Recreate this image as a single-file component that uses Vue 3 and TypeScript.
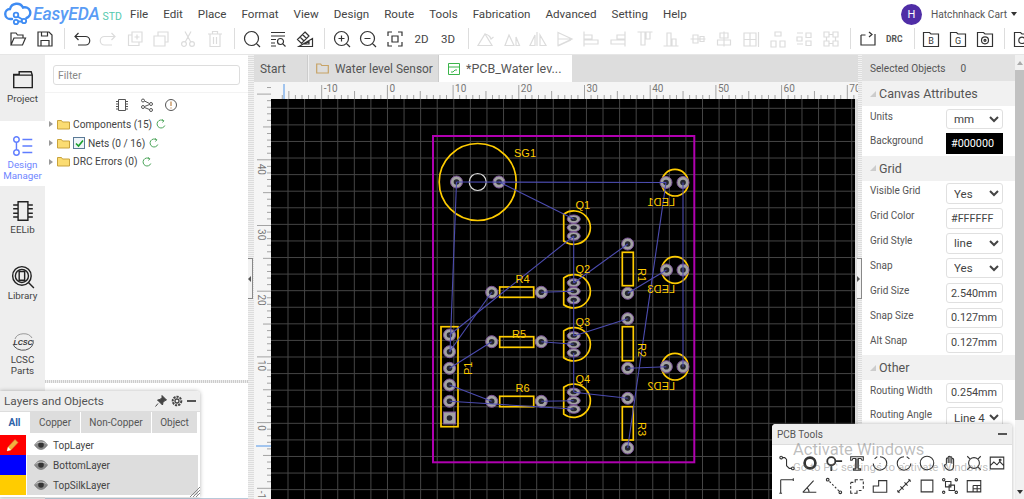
<script setup lang="ts">
const c = (x: number, y: number, r: number) =>
  `M${x - r} ${y}a${r} ${r} 0 1 0 ${2 * r} 0a${r} ${r} 0 1 0 ${-2 * r} 0`;

const menus = ['File', 'Edit', 'Place', 'Format', 'View', 'Design', 'Route', 'Tools', 'Fabrication', 'Advanced', 'Setting', 'Help'];

type Tool = { d?: string; off?: boolean; sep?: boolean; label?: string; small?: boolean; letter?: string };

const tools: Tool[] = [
  { d: 'M3 16V4h5l1.5 2H15v3M3 16h11.5L17.5 9H6L3 16z' },
  { d: 'M3 3h11l3 3v11H3zM6.5 3v4h6V3M6 17v-5.5h8V17' },
  { sep: true },
  { d: 'M6.5 4L3 7.5 6.500 11M3 7.5h10.500a4.200 4.200 0 0 1 0 8.500H6' },
  { off: true, d: 'M13.500 4L17 7.500 13.500 11M17 7.500H6.500a4.200 4.200 0 0 0 0 8.500H14' },
  { off: true, d: 'M7 3h10v10H7zM7 6H3.500v10.500H14V13M12 5.500v5M9.500 8h5' },
  { off: true, d: 'M7 3h10v10h-3v4H3V7h4zM7 7h7v6' },
  { off: true, d: `M7 2.500l5.500 10M13 2.500l-5.500 10${c(6, 15, 2.4)}${c(14, 15, 2.4)}` },
  { off: true, d: 'M3 5h14M7.500 5V2.500h5V5M5 5v12.500h10V5M8.500 8v7M11.500 8v7' },
  { sep: true },
  { d: `${c(9.5, 9.5, 7)}M14.500 14.500L18 18` },
  { d: `M3 3.500h14M3 7h14M3 10.500h5M3 14h4M3 17h5${c(12.5, 12.5, 3)}M14.800 14.800L17.500 17.500` },
  { d: 'M2.500 10.500L10 3l4 4-7.500 7.500zM5 8l4 4M7.500 5.500l4 4M10 3l4 4M4 17.500h13.500V9.500zM9.500 15h4.500v-3z' },
  { sep: true },
  { d: `${c(9.5, 9.5, 7)}M14.500 14.500L18 18M6.500 9.500h6M9.500 6.500v6` },
  { d: `${c(9.5, 9.5, 7)}M14.500 14.500L18 18M6.500 9.500h6` },
  { d: 'M3 7V3h4M13 3h4v4M17 13v4h-4M7 17H3v-4M7 7h6v6H7z' },
  { label: '2D' },
  { label: '3D' },
  { sep: true },
  { off: true, d: 'M3 16.500h14L10 5zM10 5a8 8 0 0 1 6 5M14.500 7l1.500 3 2.500-2' },
  { off: true, d: 'M3 16.500h9L7 6zM14 16.500h3.500L14 8z' },
  { off: true, d: 'M9 3v14M7 16.500H2L7 6zM12 16.500h6L12 6z' },
  { off: true, d: 'M3 3.500l14 6.500-14 6.500zM3 10h14M3 17l13-6' },
  { off: true, d: 'M3 2.500v15M3 6h8v4H3M3 11h14v4H3' },
  { off: true, d: 'M17 2.500v15M17 6H9v4h8M17 11H3v4h14' },
  { off: true, d: 'M2.500 3h15M6 3v13h4V3M11 3v7h4V3' },
  { off: true, d: 'M2.500 17h15M6 17V4h4v13M11 17v-7h4v7' },
  { off: true, d: 'M2.500 10h15M5 6h5v8H5zM12 7.500h4v5h-4z' },
  { off: true, d: 'M10 2.500v15M6 4h8v5H6zM3.500 11h13v5h-13z' },
  { off: true, d: 'M3 4h12v13H3zM9 4v13M3 10.500h12M17.500 3v15' },
  { off: true, d: 'M7 3h6v4H7zM3 12h5v6H3zM12 12h5v6h-5z' },
  { off: true, d: 'M3 8h5v4H3zM3 4h6M9 15H3M12 4h5v4.500h-5zM12 12h5v4.500h-5z' },
  { off: true, d: 'M3 3h5v5H3zM12 3h5v5h-5zM3 12h5v5H3zM12 12h5v5h-5zM8 5.500h4M8 14.500h4M5.500 8v4M14.500 8v4' },
  { sep: true },
  { d: 'M3 6v10h14V5M3 6h4.500M11 3l3 2.500-3 2.500' },
  { label: 'DRC', small: true },
  { sep: true },
  { letter: 'B', d: 'M2.500 3.500h6l1.500 1.500h7.500v12.500h-15z' },
  { letter: 'G', d: 'M2.500 3.500h6l1.500 1.500h7.500v12.500h-15z' },
  { d: `M2.500 3.500h6l1.500 1.500h7.500v12.500h-15z${c(10, 11.3, 3.5)}${c(10, 11.3, 1)}` },
  { sep: true },
  { d: `M2.500 3.500h6l1.500 1.500h7.500v12.500h-15z${c(10, 11.3, 3.2)}` },
];

const sideItems = [
  { lines: ['Project'], d: 'M2.500 18V6h5V3.500h11l1 3v11.500zM2.500 6.500h17' },
  { lines: ['Design', 'Manager'], d: `${c(5, 5, 2.5)}${c(5, 17, 2.5)}M5 7.500v7M10.500 5h9M10.500 11h9M10.500 17h9`, active: true },
  { lines: ['EELib'], d: `M6.500 2.500h9v17h-9zM2 5.500h4.500M2 9h4.500M2 13h4.500M2 16.500h4.500M15.500 5.500H20M15.500 9H20M15.500 13H20M15.500 16.500H20` },
  { lines: ['Library'], d: `${c(10, 10, 8.5)}${c(10, 10, 6)}M7.500 6h5v8h-5zM16 16l5 5` },
];

const treeRows = [
  { label: 'Components (15)', check: false },
  { label: 'Nets (0 / 16)', check: true },
  { label: 'DRC Errors (0)', check: false },
];

const layerTabs = ['All', 'Copper', 'Non-Copper', 'Object'];
const layers = [
  { name: 'TopLayer', color: '#ff0000', on: false },
  { name: 'BottomLayer', color: '#0000ff', on: true },
  { name: 'TopSilkLayer', color: '#ffcc00', on: true },
];

type Field = { label: string; value: string; select?: boolean; dark?: boolean };
const sections: { title: string; fields: Field[] }[] = [
  {
    title: 'Canvas Attributes',
    fields: [
      { label: 'Units', value: 'mm', select: true },
      { label: 'Background', value: '#000000', dark: true },
    ],
  },
  {
    title: 'Grid',
    fields: [
      { label: 'Visible Grid', value: 'Yes', select: true },
      { label: 'Grid Color', value: '#FFFFFF' },
      { label: 'Grid Style', value: 'line', select: true },
      { label: 'Snap', value: 'Yes', select: true },
      { label: 'Grid Size', value: '2.540mm' },
      { label: 'Snap Size', value: '0.127mm' },
      { label: 'Alt Snap', value: '0.127mm' },
    ],
  },
  {
    title: 'Other',
    fields: [
      { label: 'Routing Width', value: '0.254mm' },
      { label: 'Routing Angle', value: 'Line 4', select: true },
    ],
  },
];

const pcbTools: { d: string; w?: number }[] = [
  { d: `${c(3.5, 4, 1.5)}${c(16.5, 16, 1.5)}M5 4h2.500l2 2v7l3 3H15` },
  { d: c(10, 10, 6), w: 3 },
  { d: `${c(7, 8, 4.5)}M11.500 8H19M7 12.500V19`, w: 2 },
  { d: 'M3 3h14v4h-1.500l-1-2H11.500v11.500H14V18H6v-1.500h2.500V5H5.500l-1 2H3zM10 5v11' },
  { d: 'M10 3a7.500 7.500 0 1 1-7.500 7.500M4 5.500L7 3M10 10.500v.5M2.500 10.500h0' },
  { d: 'M10 3a7.500 7.500 0 1 0 7.500 7.500M16 5.500L13 3M10 10.500v.5' },
  { d: c(10, 10, 7.5) },
  { d: 'M6 11V5.500a1 1 0 0 1 2 0V10V3.500a1 1 0 0 1 2 0V10V4a1 1 0 0 1 2 0v6.500V6a1 1 0 0 1 2 0v7c0 3-2 5-4.500 5S6 17 4 13.500c-1-1.500 1-2.500 2-1' },
  { d: `${c(10, 10, 6)}M2.500 2.500l3.500 3.500M17.500 2.500L14 6M2.500 17.500L6 14M17.500 17.500L14 14` },
  { d: `M2.500 3.500h15v13h-15zM2.500 13l4-4 3.500 3 3-3.500 4.500 4.500${c(13.5, 6.8, 1)}` },
  { d: 'M3 3h14M3 3v15M17 1.500v3M1.500 18h3' },
  { d: 'M2 17h15M2 17L14 4M9 17a8 8 0 0 0-2-5' },
  { d: `${c(3, 3, 1.5)}${c(17, 17, 1.5)}M5 5l1.500 1.500M8 8l1.500 1.500M11 11l1.500 1.500M14 14l1.500 1.500` },
  { d: 'M3 6h3M8 6v-3h3M13 3h4M17 5v3M17 10v3M15 15h-3M10 15v3H7M5 18H3v-3M3 13v-3M3 8V6' },
  { d: 'M2.500 17V10h6V4h9v13z' },
  { d: 'M3 17L17 3M10.500 6l3.500 3.500M6 10.500L9.500 14M15 2.500l2.500 2.500M2.500 15L5 17.500' },
  { d: 'M3.500 3.500h13v13h-13z' },
  { d: `${c(3, 3, 1.3)}${c(17, 3, 1.3)}${c(3, 17, 1.3)}${c(17, 17, 1.3)}M5 5h6v6H5zM9 9h6v6H9z` },
  { d: 'M2.500 4h15v12.500h-15zM9 9.500h8.500M9 13h8.500M9 9.500v7M13.500 9.500v7' },
];

// board geometry, in page pixels
const gridX = Array.from({ length: 35 }, (_, i) => 288 + i * 16.58);
const gridY = Array.from({ length: 24 }, (_, i) => 108.3 + i * 16.58);
const step = 6.57;
const topTicks = Array.from({ length: 90 }, (_, i) => {
  const x = 321.7 - 6 * step + i * step;
  const n = i - 6;
  const mod = ((n % 10) + 10) % 10;
  return { x, h: mod === 0 ? 14 : mod === 5 ? 8 : 4 };
});
const leftTicks = Array.from({ length: 62 }, (_, i) => {
  const y = 488.3 - i * step;
  const mod = i % 10;
  return { y, h: mod === 0 ? 14 : mod === 5 ? 8 : 4 };
});
const topLabels = ['-10', '0', '10', '20', '30', '40', '50', '60', '70'].map((t, i) => ({ t, x: 321.7 + i * 65.7 }));
const leftLabels = ['40', '30', '20', '10', '0', '-1'].map((t, i) => ({ t, y: 161.7 + i * 65.4 }));

const pads = [
  [456.5, 182], [499, 182], [666, 182.5], [683, 182.5], [666.5, 270], [683, 270], [666.3, 366.7], [683, 366.7],
  [491.7, 292.3], [541.3, 292.3], [491.7, 341.7], [541.3, 341.7], [491.7, 401.3], [541.3, 401.3],
  [627.7, 244], [627.7, 293.3], [627.7, 318.7], [627.7, 368.3], [627.7, 398.3], [627.7, 448],
  [449.5, 335], [449.5, 351.7], [449.5, 368.3], [449.5, 385], [449.5, 401.3],
];
const transistors = [227.6, 291.3, 344.3, 400.7];
const ovals = transistors.flatMap((y) => [y - 8.5, y, y + 8.5]);
const qPath = (y: number) => `M563.7 ${y - 13.4}A16.7 16.7 0 1 1 563.7 ${y + 13.4}Z`;
const bodies = [
  [499.7, 287, 34, 10.3], [499.7, 336.7, 34, 10.6], [499.7, 396.3, 34, 10.4],
  [622.3, 252.3, 11, 33.4], [622.3, 326.7, 11, 34], [622.3, 406.7, 11, 33.3], [441, 326.7, 17, 100],
];
const ratlines = [
  [456.5, 182, 666, 182.5], [456.5, 182, 450, 352], [499, 182, 573.7, 219], [573.7, 236, 449.5, 335],
  [573.7, 236, 573.7, 283], [573.7, 300, 573.7, 336], [573.7, 353, 573.7, 392],
  [627.7, 244, 573.7, 283], [491.7, 292.3, 449.5, 351.7], [541.3, 292.3, 573.7, 291.3],
  [627.7, 293.3, 666.5, 270], [666, 182.5, 627.7, 448], [683, 182.5, 683, 366.7],
  [491.7, 341.7, 449.5, 368.3], [541.3, 341.7, 573.7, 344.3], [573.7, 336, 627.7, 318.7],
  [627.7, 368.3, 666.3, 366.7], [573.7, 392.3, 627.7, 398.3], [491.7, 401.3, 449.5, 385],
  [541.3, 401.3, 573.7, 400.7], [449.5, 401.3, 573.7, 409],
];
const labels = [
  { t: 'SG1', x: 514, y: 157 }, { t: 'Q1', x: 575.5, y: 209 }, { t: 'Q2', x: 575.5, y: 273 },
  { t: 'Q3', x: 575.5, y: 326 }, { t: 'Q4', x: 575.5, y: 383 }, { t: 'R4', x: 515.5, y: 283 },
  { t: 'R5', x: 512, y: 338 }, { t: 'R6', x: 515.5, y: 392 },
];
const sideLabels = [
  { t: 'R1', x: 638, y: 268, r: 90 }, { t: 'R2', x: 638, y: 343, r: 90 }, { t: 'R3', x: 638, y: 422, r: 90 },
  { t: 'P1', x: 472, y: 375, r: -90 },
];
const mirrored = [
  { t: 'LED1', y: 206 }, { t: 'LED3', y: 293 }, { t: 'LED2', y: 390 },
];
</script>

<template>
  <div class="app">
    <header class="menubar">
      <div class="logo">
        <svg width="29" height="24" viewBox="0 0 29 24" class="logo-cloud">
          <path d="M8 17H6.500a5 5 0 0 1-.5-10A7 7 0 0 1 19 5.500a5.500 5.500 0 0 1 3.500 10.500" fill="none" stroke="#3f8cf3" stroke-width="2.400" stroke-linecap="round" />
          <circle cx="12" cy="13" r="2.300" fill="none" stroke="#3f8cf3" stroke-width="1.800" />
          <circle cx="12" cy="20" r="2.200" fill="none" stroke="#3f8cf3" stroke-width="1.800" />
          <circle cx="20" cy="19" r="2.200" fill="none" stroke="#3f8cf3" stroke-width="1.800" />
          <path d="M14 19.500h4M13.500 14.500l5 3" stroke="#3f8cf3" stroke-width="1.800" />
        </svg>
        <span class="logo-name">EasyEDA</span>
        <span class="logo-std">STD</span>
      </div>
      <nav class="menu">
        <span v-for="m in menus" :key="m">{{ m }}</span>
      </nav>
      <div class="user">
        <span class="avatar">H</span>
        <span class="user-name">Hatchnhack Cart</span>
        <span class="caret"></span>
      </div>
    </header>

    <div class="toolbar">
      <template v-for="(t, i) in tools" :key="i">
        <span v-if="t.sep" class="tb-sep"></span>
        <span v-else-if="t.label" class="tb-btn tb-label" :class="{ small: t.small }">{{ t.label }}</span>
        <span v-else class="tb-btn">
          <svg width="20" height="20" viewBox="0 0 20 20" fill="none" :stroke="t.off ? '#dcdcdc' : '#333'" stroke-width="1.200">
            <path :d="t.d" />
            <text v-if="t.letter" x="10" y="15" class="tb-letter" text-anchor="middle">{{ t.letter }}</text>
          </svg>
        </span>
      </template>
    </div>

    <main class="body">
      <aside class="sidebar">
        <div v-for="s in sideItems" :key="s.lines[0]" class="side-item" :class="{ active: s.active }">
          <svg width="24" height="24" viewBox="0 0 22 22" fill="none" :stroke="s.active ? '#5f7dff' : '#222'" stroke-width="1.300">
            <path :d="s.d" />
          </svg>
          <span v-for="l in s.lines" :key="l">{{ l }}</span>
        </div>
        <div class="side-item lcsc-item">
          <svg width="24" height="18" viewBox="0 0 24 18">
            <path d="M2 11a10 8 0 0 0 20 -4" fill="none" stroke="#555" stroke-width="1" />
            <path d="M4 6a9 7 0 0 1 17 -1" fill="none" stroke="#999" stroke-width="1" />
            <text x="12" y="12" class="lcsc" text-anchor="middle">LCSC</text>
          </svg>
          <span>LCSC</span>
          <span>Parts</span>
        </div>
      </aside>

      <section class="tree">
        <div class="filter-wrap">
          <input class="filter" placeholder="Filter" />
        </div>
        <div class="tree-icons">
          <svg width="14" height="14" viewBox="0 0 14 14" fill="none" stroke="#555"><path d="M3.500 1.500h7v11h-7zM1 3.500h2.500M1 6h2.500M1 8.500h2.500M1 11h2.500M10.500 3.500H13M10.500 6H13M10.500 8.500H13M10.500 11H13" /></svg>
          <svg width="14" height="14" viewBox="0 0 14 14" fill="none" stroke="#555"><circle cx="3" cy="2.500" r="1.500" /><circle cx="3" cy="9" r="1.500" /><circle cx="11" cy="6" r="1.500" /><circle cx="11" cy="12" r="1.500" /><path d="M4.500 3l5 2.500M4.500 8.500l5-2M4.500 9.500l5 2" /></svg>
          <svg width="14" height="14" viewBox="0 0 14 14" fill="none" stroke="#555"><circle cx="7" cy="7" r="5.500" /><path d="M7 3.500v4.500M7 9.500v1" stroke="#b06a20" /></svg>
        </div>
        <ul class="tree-list">
          <li v-for="r in treeRows" :key="r.label" class="tree-row">
            <span class="tree-arrow"></span>
            <svg width="13" height="11" viewBox="0 0 13 11" class="folder">
              <path d="M.5 10V1.500h4l1 1.500h7v7z" fill="#fbdc72" stroke="#c9a33c" />
            </svg>
            <span v-if="r.check" class="check">
              <svg width="9" height="9" viewBox="0 0 9 9" fill="none" stroke="#19a02c" stroke-width="1.600"><path d="M1 4.500l2.500 2.500L8 1.500" /></svg>
            </span>
            <span class="tree-label">{{ r.label }}</span>
            <svg width="10" height="10" viewBox="0 0 10 10" fill="none" stroke="#4ca55a" class="refresh"><path d="M8.800 6.500A4 4 0 1 1 7.500 1.800M6 .5l1.800 1.300L6.500 3.500" /></svg>
          </li>
        </ul>
        <div class="tree-split"></div>
      </section>

      <div class="splitter"></div>

      <section class="center">
        <div class="tabs">
          <div class="tab start">Start</div>
          <div class="tab project">
            <svg width="13" height="11" viewBox="0 0 13 11" class="tab-folder"><path d="M.7 10V1h4l1 1.500h6.600V10z" fill="none" stroke="#c7a366" stroke-width="1.200" /></svg>
            Water level Sensor
          </div>
          <div class="tab current">
            <svg width="12" height="12" viewBox="0 0 12 12" fill="none" stroke="#3bb54a" class="tab-pcb"><path d="M.5.500h11v11H.5zM.5 4h11M3 9h2l2-2h2" /></svg>
            *PCB_Water lev...
          </div>
        </div>
        <svg class="board" width="604" height="417" viewBox="254 82 604 417">
          <rect x="254" y="82" width="604" height="417" fill="#f5f5f5" />
          <rect x="271" y="99" width="584" height="400" fill="#000" />
          <rect x="855" y="99" width="3" height="400" fill="#dcdcdc" />
          <g stroke="#454545">
            <line v-for="x in gridX" :key="x" :x1="x" y1="99" :x2="x" y2="499" />
            <line v-for="y in gridY" :key="y" x1="271" :y1="y" x2="855" :y2="y" />
          </g>
          <g stroke="#a3a3a3">
            <line v-for="t in topTicks" :key="t.x" :x1="t.x" y1="99" :x2="t.x" :y2="99 - t.h" />
            <line v-for="t in leftTicks" :key="t.y" x1="271" :y1="t.y" :x2="271 - t.h" :y2="t.y" />
          </g>
          <text v-for="l in topLabels" :key="l.t" :x="l.x + 2" y="92" class="ruler-text">{{ l.t }}</text>
          <text v-for="l in leftLabels" :key="l.t" class="ruler-text" :transform="`translate(258 ${l.y + 2}) rotate(90)`">{{ l.t }}</text>
          <line x1="284" y1="84" x2="284" y2="99" stroke="#4f94e8" />
          <line x1="256" y1="446" x2="271" y2="446" stroke="#4f94e8" />

          <rect x="433" y="136" width="261.300" height="326.300" fill="none" stroke="#b000b0" stroke-width="2" />
          <g fill="none" stroke="#ffcc00" stroke-width="1.700">
            <circle cx="477.700" cy="182" r="38.500" />
            <circle cx="675" cy="182.700" r="13.300" />
            <circle cx="675" cy="270" r="13.300" />
            <circle cx="675" cy="366.700" r="13.300" />
            <path v-for="y in transistors" :key="y" :d="qPath(y)" />
            <rect v-for="b in bodies" :key="b[1] + b[0]" :x="b[0]" :y="b[1]" :width="b[2]" :height="b[3]" />
          </g>
          <circle cx="477.700" cy="182" r="8.500" fill="none" stroke="#d9d9d9" stroke-width="1.200" />
          <g fill="#a3a3a3" stroke="#7c5599">
            <circle v-for="p in pads" :key="p[0] * p[1]" :cx="p[0]" :cy="p[1]" r="6" />
            <ellipse v-for="y in ovals" :key="y" cx="573.700" :cy="y" rx="6.500" ry="4.100" />
            <rect x="443.500" y="412" width="12" height="12" />
          </g>
          <g fill="#25252f">
            <circle v-for="p in pads" :key="p[0] * p[1]" :cx="p[0]" :cy="p[1]" r="2.800" />
            <ellipse v-for="y in ovals" :key="y" cx="573.700" :cy="y" rx="3.200" ry="2" />
            <circle cx="449.500" cy="418" r="2.800" />
          </g>
          <g stroke="#4c4cb0" stroke-width="1.100">
            <line v-for="(l, i) in ratlines" :key="i" :x1="l[0]" :y1="l[1]" :x2="l[2]" :y2="l[3]" />
          </g>
          <text v-for="l in labels" :key="l.t" :x="l.x" :y="l.y" class="silk">{{ l.t }}</text>
          <text v-for="l in sideLabels" :key="l.t" class="silk" :transform="`translate(${l.x} ${l.y}) rotate(${l.r})`">{{ l.t }}</text>
          <text v-for="l in mirrored" :key="l.t" class="silk" :transform="`translate(675 ${l.y}) scale(-1 1)`">{{ l.t }}</text>
        </svg>
      </section>

      <div class="splitter right-split"></div>

      <aside class="props">
        <div class="props-scroll">
          <div class="selected"><span>Selected Objects</span><span>0</span></div>
          <template v-for="s in sections" :key="s.title">
            <div class="section-title"><span class="section-mark"></span>{{ s.title }}</div>
            <div v-for="f in s.fields" :key="f.label" class="field">
              <label>{{ f.label }}</label>
              <select v-if="f.select" class="control pick"><option>{{ f.value }}</option></select>
              <input v-else class="control" :class="{ dark: f.dark }" :value="f.value" />
            </div>
          </template>
        </div>
        <div class="scrollbar">
          <span class="sb-up"></span>
          <span class="sb-thumb"></span>
          <span class="sb-down"></span>
        </div>
      </aside>
    </main>

    <!-- floating windows -->
    <div class="handle handle-left"><span></span></div>
    <div class="handle handle-right"><span></span></div>

    <div class="layers">
      <div class="win-head">
        <span class="win-title">Layers and Objects</span>
        <svg width="12" height="12" viewBox="0 0 12 12" fill="#444"><path d="M7 .5l4.500 4.500-1.500.5-2 2-.5 2.500-5-5 2.500-.5 2-2zM3 8.500L.5 11.500" stroke="#444" /></svg>
        <svg width="12" height="12" viewBox="0 0 12 12" fill="none" stroke="#444" stroke-width="1.300"><circle cx="6" cy="6" r="2" /><circle cx="6" cy="6" r="4.300" stroke-dasharray="2.200 1" stroke-width="2" /></svg>
        <span class="win-min"></span>
      </div>
      <div class="layer-tabs">
        <span v-for="(t, i) in layerTabs" :key="t" class="layer-tab" :class="{ active: i === 0 }">{{ t }}</span>
      </div>
      <div v-for="l in layers" :key="l.name" class="layer-row">
        <span class="swatch" :style="{ background: l.color }">
          <svg v-if="!l.on" width="14" height="14" viewBox="0 0 14 14"><path d="M1 13l1-4 7-7.500 3 3-7 7.500z" fill="#f3b13f" stroke="#c9883a" stroke-width=".6" /><path d="M1 13l1-4 3 3z" fill="#fff" /></svg>
        </span>
        <span class="layer-name" :class="{ on: l.on }">
          <svg width="14" height="10" viewBox="0 0 14 10"><path d="M.5 5C3 1.500 5 .5 7 .5s4 1 6.500 4.500C11 8.500 9 9.500 7 9.500S3 8.500.5 5z" fill="#8a8a8a" stroke="#666" stroke-width=".6" /><circle cx="7" cy="5" r="2.800" fill="#333" /><path d="M1.500 4C4 1.500 10 1.500 12.500 4" fill="none" stroke="#e6e6e6" stroke-width=".7" /></svg>
          {{ l.name }}
        </span>
      </div>
      <svg class="resize" width="10" height="10" viewBox="0 0 10 10" stroke="#888"><path d="M0 10L10 0M3 10l7-7M6 10l4-4" /></svg>
    </div>

    <div class="pcb-tools">
      <div class="win-head">
        <span class="win-title">PCB Tools</span>
        <span class="win-min"></span>
      </div>
      <div class="pcb-grid">
        <svg v-for="(t, i) in pcbTools" :key="i" width="18" height="18" viewBox="0 0 20 20" fill="none" stroke="#333" :stroke-width="t.w || 1.2">
          <path :d="t.d" />
        </svg>
      </div>
      <div class="watermark">
        <span class="wm-big">Activate Windows</span>
        <span class="wm-small">Go to PC settings to activate Windows.</span>
      </div>
    </div>
  </div>
</template>

<style scoped>
.app {
  position: relative;
  width: 1024px;
  height: 499px;
  overflow: hidden;
  display: flex;
  flex-direction: column;
  background: #fff;
  color: #444;
  font-family: Roboto, "Liberation Sans", sans-serif;
  font-size: 12px;
}
.menubar {
  height: 28px;
  display: flex;
  align-items: center;
  flex: none;
}
.logo {
  display: flex;
  align-items: center;
  width: 130px;
  flex: none;
}
.logo-cloud {
  margin-left: 4px;
  flex: none;
}
.logo-name {
  font-size: 17.6px;
  font-weight: 500;
  font-style: italic;
  color: #5a9cf5;
  letter-spacing: -0.2px;
}
.logo-std {
  font-size: 10.5px;
  color: #55c9ae;
  margin: 4px 0 0 3px;
}
.menu {
  display: flex;
  gap: 15px;
  font-size: 11.6px;
  color: #444;
}
.user {
  margin-left: auto;
  display: flex;
  align-items: center;
  padding-right: 7px;
}
.avatar {
  width: 21px;
  height: 21px;
  border-radius: 50%;
  background: #4f2da6;
  color: #fff;
  display: grid;
  place-items: center;
  font-size: 11px;
  margin-right: 9px;
}
.user-name {
  font-size: 10.2px;
  color: #555;
}
.caret {
  border: 3px solid transparent;
  border-top: 4px solid #333;
  border-bottom: 0;
  margin-left: 4px;
}
.toolbar {
  height: 27px;
  flex: none;
  display: flex;
  align-items: center;
  padding: 0 0 5px 4.7px;
  border-bottom: 1px solid #e6e6e6;
  box-sizing: border-box;
  overflow: hidden;
}
.tb-btn {
  width: 26.6px;
  flex: none;
  display: grid;
  place-items: center;
}
.tb-sep {
  width: 1px;
  height: 21px;
  background: #ddd;
  flex: none;
  margin: 0 3px 0 6.4px;
}
.tb-label {
  font-size: 11.5px;
  color: #444;
}
.tb-label.small {
  font-size: 8.5px;
  font-weight: 700;
  color: #555;
}
.tb-letter {
  font-size: 9px;
  stroke: none;
  fill: #333;
  font-family: Roboto, sans-serif;
}
.body {
  flex: 1;
  display: flex;
  min-height: 0;
}
.sidebar {
  width: 45px;
  flex: none;
  background: #eee;
}
.side-item {
  height: 65.5px;
  box-sizing: border-box;
  padding-top: 13px;
  display: flex;
  flex-direction: column;
  align-items: center;
  font-size: 9.8px;
  line-height: 11px;
  color: #444;
}
.side-item svg {
  margin-bottom: 1px;
}
.lcsc-item {
  padding-top: 16px;
}
.lcsc-item svg {
  margin-bottom: 3px;
}
.side-item.active {
  background: #fff;
  color: #6f86ff;
}
.lcsc {
  font-size: 7px;
  font-weight: 700;
  font-style: italic;
  fill: #333;
  font-family: "Liberation Sans", sans-serif;
}
.tree {
  width: 203px;
  flex: none;
  position: relative;
  display: flex;
  flex-direction: column;
  border-bottom: 1px solid #b9c9d9;
  box-sizing: border-box;
}
.filter-wrap {
  height: 38px;
  flex: none;
  box-sizing: border-box;
  padding: 10px 8px 0;
  border-bottom: 1px solid #f3f3f3;
}
.filter {
  width: 187px;
  height: 20px;
  box-sizing: border-box;
  border: 1px solid #ddd;
  border-radius: 3px;
  padding: 0 4px;
  font: 10.5px Roboto, sans-serif;
  outline: none;
}
.filter::placeholder {
  color: #888;
}
.tree-icons {
  display: flex;
  justify-content: center;
  gap: 10.5px;
  padding-top: 5px;
  height: 17px;
}
.tree-list {
  list-style: none;
  margin: 0;
  padding: 0 0 0 4px;
}
.tree-row {
  height: 18.7px;
  display: flex;
  align-items: center;
  font-size: 10.2px;
  color: #444;
}
.tree-arrow {
  border: 3px solid transparent;
  border-left: 4px solid #999;
  border-right: 0;
  margin-right: 4px;
}
.folder {
  flex: none;
  margin-right: 3px;
}
.check {
  width: 10px;
  height: 10px;
  border: 1px solid #5b7a96;
  background: #eef4f8;
  margin-right: 3px;
  display: grid;
  place-items: center;
}
.refresh {
  margin-left: 4px;
}
.tree-split {
  position: absolute;
  left: 0;
  right: 0;
  top: 325px;
  height: 3px;
  background: repeating-linear-gradient(90deg, #ccc 0 1px, #eee 1px 2px);
}
.splitter {
  width: 6px;
  flex: none;
  background: repeating-linear-gradient(0deg, #ddd 0 1px, #f2f2f2 1px 2px);
}
.right-split {
  width: 4px;
}
.center {
  flex: 1;
  min-width: 0;
  display: flex;
  flex-direction: column;
}
.tabs {
  height: 27px;
  flex: none;
  display: flex;
  background: #ddd;
  font-size: 11.9px;
  color: #555;
}
.tab {
  display: flex;
  align-items: center;
  box-sizing: border-box;
  border-right: 1px solid #ccc;
}
.start {
  width: 54px;
  padding-left: 6px;
}
.project {
  width: 131px;
  padding-left: 7px;
  border-left: 1px solid #f0f0f0;
}
.tab-folder {
  margin-right: 6px;
}
.current {
  width: 133px;
  padding-left: 9px;
  background: #fff;
  border-right: 0;
  font-size: 12.5px;
}
.tab-pcb {
  margin-right: 6px;
}
.board {
  display: block;
  flex: none;
}
.ruler-text {
  font-size: 10px;
  fill: #777;
  font-family: Roboto, sans-serif;
}
.silk {
  font-size: 11px;
  fill: #ffcc00;
  font-family: "Liberation Sans", sans-serif;
}
.props {
  width: 162px;
  flex: none;
  display: flex;
}
.props-scroll {
  width: 153px;
  flex: none;
}
.selected {
  height: 26px;
  background: #e2e2e2;
  display: flex;
  align-items: center;
  padding-left: 8px;
  gap: 15px;
  font-size: 10.1px;
  color: #555;
}
.section-title {
  height: 25px;
  background: #f1f1f1;
  display: flex;
  align-items: center;
  padding-left: 8px;
  font-size: 12.5px;
  color: #555;
}
.section-mark {
  border-style: solid;
  border-width: 0 0 6px 6px;
  border-color: transparent transparent #ccc transparent;
  margin-right: 3px;
}
.field {
  height: 24.9px;
  display: flex;
  justify-content: space-between;
  align-items: flex-start;
  padding: 2.5px 12px 0 8px;
  box-sizing: border-box;
  font-size: 10px;
  color: #555;
}
.field label {
  line-height: 16px;
}
.control {
  width: 57px;
  height: 20.5px;
  box-sizing: border-box;
  border: 1px solid #e0e0e0;
  border-radius: 3px;
  background: #fff;
  font: 10.8px Roboto, sans-serif;
  color: #444;
  padding: 0 4px;
  outline: none;
}
.pick {
  font-size: 11.5px;
  padding: 0 0 0 3px;
}
.control.dark {
  background: #000;
  color: #fff;
  border-color: #000;
  border-radius: 0;
}
.scrollbar {
  width: 9px;
  flex: none;
  background: #f1f1f1;
  display: flex;
  flex-direction: column;
  align-items: center;
}
.sb-up {
  border: 3px solid transparent;
  border-bottom: 4px solid #aaa;
  border-top: 0;
  margin: 6px 0 5px;
}
.sb-thumb {
  width: 100%;
  height: 350px;
  background: #c1c1c1;
}
.sb-down {
  border: 3px solid transparent;
  border-top: 4px solid #333;
  border-bottom: 0;
  margin-top: auto;
  margin-bottom: 5px;
}
.handle {
  position: absolute;
  top: 258px;
  width: 5px;
  height: 41px;
  box-sizing: border-box;
  background: #f2f2f2;
  border: 1px solid #888;
  border-left: 0;
  display: flex;
  align-items: center;
}
.handle-left {
  left: 248px;
}
.handle-left span {
  border: 3px solid transparent;
  border-right: 3px solid #555;
  border-left: 0;
}
.handle-right {
  left: 857px;
}
.handle-right span {
  border: 3px solid transparent;
  border-left: 3px solid #555;
  border-right: 0;
}
.layers {
  position: absolute;
  left: 0;
  top: 391px;
  width: 200px;
  height: 106px;
  background: #fff;
  box-shadow: 0 0 4px rgba(0, 0, 0, 0.3);
  border-radius: 0 4px 0 0;
}
.win-head {
  height: 20px;
  background: #eee;
  display: flex;
  align-items: center;
  gap: 4px;
  padding: 0 4px;
  border-bottom: 1px solid #ddd;
  border-radius: 0 4px 0 0;
}
.win-title {
  margin-right: auto;
  font-size: 11.8px;
  color: #555;
}
.win-min {
  width: 9px;
  height: 1.5px;
  background: #555;
}
.layer-tabs {
  display: flex;
  gap: 1px;
  height: 21px;
  font-size: 10px;
  color: #555;
  margin-bottom: 2px;
}
.layer-tab {
  background: #ddd;
  display: grid;
  place-items: center;
}
.layer-tab:nth-child(1) {
  width: 29px;
  background: #fff;
  color: #2c62a8;
  font-weight: 700;
}
.layer-tab:nth-child(2) {
  width: 50px;
}
.layer-tab:nth-child(3) {
  width: 70px;
}
.layer-tab:nth-child(4) {
  width: 45px;
}
.layer-row {
  height: 20px;
  display: flex;
  font-size: 10px;
}
.swatch {
  width: 26px;
  flex: none;
  display: grid;
  place-items: center;
}
.layer-name {
  flex: 1;
  margin: 0 2px 0 1px;
  display: flex;
  align-items: center;
  gap: 5px;
  padding-left: 7px;
  color: #444;
}
.layer-name.on {
  background: #ddd;
}
.resize {
  position: absolute;
  right: 0;
  bottom: 0;
}
.pcb-tools {
  position: absolute;
  left: 772px;
  top: 424px;
  width: 240px;
  height: 78px;
  background: #fff;
  box-shadow: 0 0 4px rgba(0, 0, 0, 0.3);
  border-radius: 4px 4px 0 0;
}
.pcb-tools .win-head {
  border-radius: 4px 4px 0 0;
  padding: 0 5px;
}
.pcb-tools .win-title {
  font-size: 10px;
}
.pcb-grid {
  display: grid;
  grid-template-columns: repeat(10, 23.3px);
  grid-auto-rows: 23px;
  justify-items: center;
  align-items: center;
  padding: 6px 0 0 3.5px;
}
.watermark {
  position: absolute;
  left: 21px;
  top: 16px;
  display: flex;
  flex-direction: column;
  color: rgba(110, 110, 110, 0.45);
  pointer-events: none;
  white-space: nowrap;
}
.wm-big {
  font-size: 16.5px;
  line-height: 20px;
}
.wm-small {
  font-size: 11.5px;
  line-height: 14px;
}
</style>

<style>
body {
  margin: 0;
  overflow: hidden;
}
</style>
